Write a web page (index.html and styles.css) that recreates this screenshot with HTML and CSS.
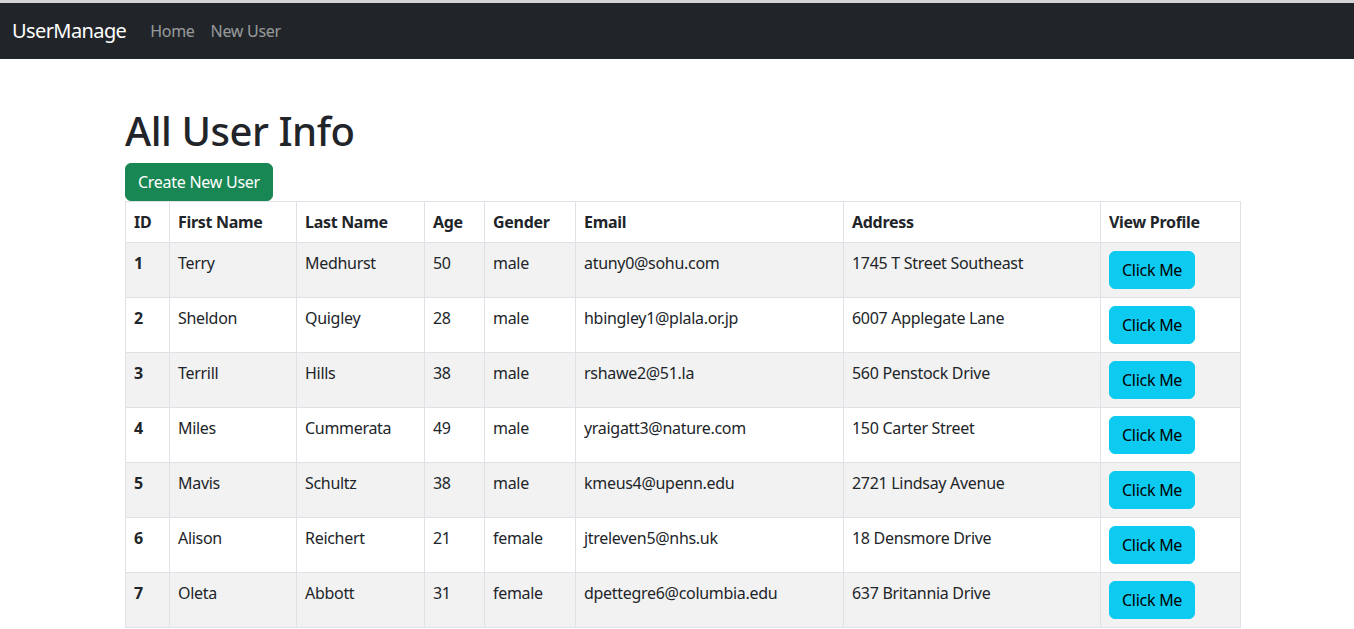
FILE: index.html
```html
<!DOCTYPE html>
<html lang="en">
<head>
<meta charset="utf-8">
<title>UserManage</title>
<link rel="stylesheet" href="styles.css">
</head>
<body>
<div class="topline"></div>
<nav class="navbar">
  <a class="brand" href="#">UserManage</a>
  <a class="nav-link" href="#">Home</a>
  <a class="nav-link" href="#">New User</a>
</nav>
<main class="container">
  <h1 class="title">All User Info</h1>
  <button class="btn btn-success">Create New User</button>
  <table class="table">
    <colgroup>
      <col class="c-id"><col class="c-first"><col class="c-last"><col class="c-age"><col class="c-gender"><col class="c-email"><col class="c-address"><col class="c-view">
    </colgroup>
    <thead>
      <tr><th>ID</th><th>First Name</th><th>Last Name</th><th>Age</th><th>Gender</th><th>Email</th><th>Address</th><th>View Profile</th></tr>
    </thead>
    <tbody>
      <tr><th>1</th><td>Terry</td><td>Medhurst</td><td>50</td><td>male</td><td>atuny0@sohu.com</td><td>1745 T Street Southeast</td><td><button class="btn btn-info">Click Me</button></td></tr>
      <tr><th>2</th><td>Sheldon</td><td>Quigley</td><td>28</td><td>male</td><td>hbingley1@plala.or.jp</td><td>6007 Applegate Lane</td><td><button class="btn btn-info">Click Me</button></td></tr>
      <tr><th>3</th><td>Terrill</td><td>Hills</td><td>38</td><td>male</td><td>rshawe2@51.la</td><td>560 Penstock Drive</td><td><button class="btn btn-info">Click Me</button></td></tr>
      <tr><th>4</th><td>Miles</td><td>Cummerata</td><td>49</td><td>male</td><td>yraigatt3@nature.com</td><td>150 Carter Street</td><td><button class="btn btn-info">Click Me</button></td></tr>
      <tr><th>5</th><td>Mavis</td><td>Schultz</td><td>38</td><td>male</td><td>kmeus4@upenn.edu</td><td>2721 Lindsay Avenue</td><td><button class="btn btn-info">Click Me</button></td></tr>
      <tr><th>6</th><td>Alison</td><td>Reichert</td><td>21</td><td>female</td><td>jtreleven5@nhs.uk</td><td>18 Densmore Drive</td><td><button class="btn btn-info">Click Me</button></td></tr>
      <tr><th>7</th><td>Oleta</td><td>Abbott</td><td>31</td><td>female</td><td>dpettegre6@columbia.edu</td><td>637 Britannia Drive</td><td><button class="btn btn-info">Click Me</button></td></tr>
    </tbody>
  </table>
</main>
</body>
</html>
```
FILE: styles.css
```css
html, body {
  margin: 0;
  padding: 0;
  overflow: hidden;
  height: 629px;
}
body {
  font-family: "Noto Sans", "Open Sans", sans-serif;
  font-size: 16px;
  line-height: 1.5;
  letter-spacing: -0.3px;
  color: #212529;
  background: #fff;
}
.topline {
  height: 3px;
  background: #d4d4d4;
}
.navbar {
  height: 56px;
  box-sizing: border-box;
  background: #212529;
  display: flex;
  align-items: center;
  padding: 8px 12px;
}
.brand {
  color: #fff;
  text-decoration: none;
  font-size: 20px;
  line-height: 30px;
  letter-spacing: -0.6px;
  margin-right: 16px;
}
.nav-link {
  color: rgba(255, 255, 255, 0.55);
  text-decoration: none;
  padding: 8px;
  line-height: 24px;
}
.container {
  width: 1116px;
  margin-left: 125px;
  padding-top: 48px;
}
.title {
  font-size: 40px;
  font-weight: 500;
  line-height: 1.2;
  letter-spacing: -0.45px;
  margin: 0 0 8px 0;
}
.btn {
  font-family: inherit;
  font-size: 16px;
  line-height: 24px;
  letter-spacing: -0.27px;
  padding: 6px 12px;
  border: 1px solid transparent;
  border-radius: 6px;
  cursor: pointer;
  display: inline-block;
  vertical-align: top;
}
.btn-success {
  background: #198754;
  border-color: #198754;
  color: #fff;
}
.btn-info {
  background: #0dcaf0;
  border-color: #0dcaf0;
  color: #000;
}
.table {
  border-collapse: collapse;
  table-layout: fixed;
  width: 1116px;
}
.table th, .table td {
  border: 1px solid #dee2e6;
  padding: 8px;
  text-align: left;
  vertical-align: top;
  white-space: nowrap;
}
.table th {
  font-weight: 700;
}
.table tbody tr:nth-child(odd) > * {
  background: #f2f2f2;
}
.c-id { width: 44px; }
.c-first { width: 127px; }
.c-last { width: 128px; }
.c-age { width: 60px; }
.c-gender { width: 91px; }
.c-email { width: 268px; }
.c-address { width: 257px; }
.c-view { width: 140px; }
```
